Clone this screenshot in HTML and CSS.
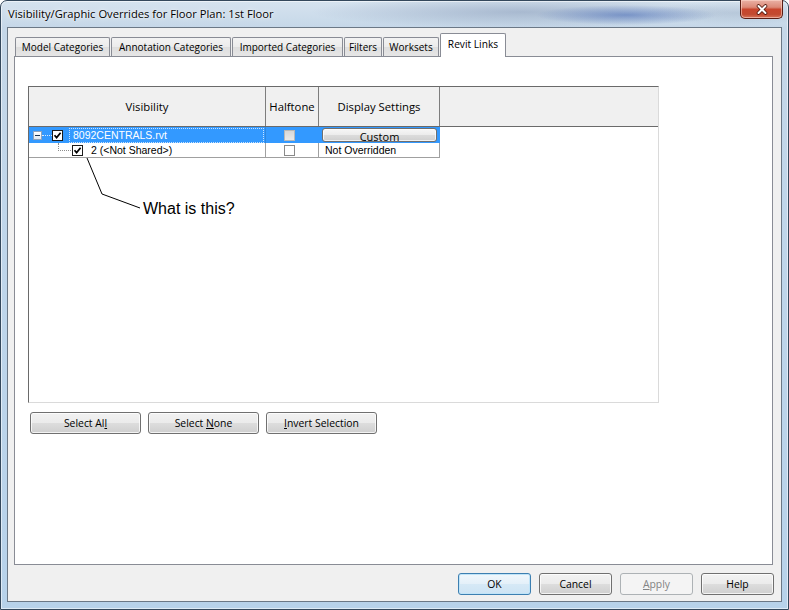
FILE: index.html
```html
<!DOCTYPE html>
<html lang="en">
<head>
<meta charset="utf-8">
<title>Visibility/Graphic Overrides</title>
<link rel="stylesheet" href="styles.css">
</head>
<body>
<div class="window">
  <div class="titlebar">
    <div class="title">Visibility/Graphic Overrides for Floor Plan: 1st Floor</div>
    <div class="close" aria-label="Close">
      <svg width="14" height="11" viewBox="0 0 14 11"><path d="M3.5 2 L10.5 9 M10.5 2 L3.5 9" stroke="#4a1208" stroke-width="3.6" stroke-linecap="round"/><path d="M3.5 2 L10.5 9 M10.5 2 L3.5 9" stroke="#ffffff" stroke-width="2" stroke-linecap="round"/></svg>
    </div>
  </div>
  <div class="client">
    <div class="tabs">
      <div class="tab w-model">Model Categories</div>
      <div class="tab w-anno">Annotation Categories</div>
      <div class="tab w-imp">Imported Categories</div>
      <div class="tab w-filt">Filters</div>
      <div class="tab w-work">Worksets</div>
      <div class="tab active w-links">Revit Links</div>
    </div>
    <div class="panel">
      <div class="grid">
        <div class="ghead">
          <div class="hcell col-vis">Visibility</div>
          <div class="hcell col-half">Halftone</div>
          <div class="hcell col-disp">Display Settings</div>
          <div class="hcell col-rest"></div>
        </div>
        <div class="grow selected">
          <div class="cell col-vis tree">
            <span class="expander"><span class="minus"></span></span>
            <span class="hdots"></span>
            <span class="cb dark"><svg width="9" height="9" viewBox="0 0 9 9"><path d="M1.5 4.2 L3.6 6.6 L7.6 1.8" fill="none" stroke="#000" stroke-width="1.7"/></svg></span>
            <span class="label focus">8092CENTRALS.rvt</span>
          </div>
          <div class="cell col-half"><span class="cb disabled"></span></div>
          <div class="cell col-disp"><div class="cellbtn">Custom</div></div>
        </div>
        <div class="grow">
          <div class="cell col-vis tree child">
            <span class="elbow"></span>
            <span class="cb dark"><svg width="9" height="9" viewBox="0 0 9 9"><path d="M1.5 4.2 L3.6 6.6 L7.6 1.8" fill="none" stroke="#000" stroke-width="1.7"/></svg></span>
            <span class="label">2 (&lt;Not Shared&gt;)</span>
          </div>
          <div class="cell col-half"><span class="cb"></span></div>
          <div class="cell col-disp"><span class="celltext">Not Overridden</span></div>
        </div>
      </div>
      <div class="actions">
        <button class="btn"><span>Select Al<u>l</u></span></button>
        <button class="btn"><span>Select <u>N</u>one</span></button>
        <button class="btn"><span><u>I</u>nvert Selection</span></button>
      </div>
    </div>
    <div class="footer">
      <button class="btn fbtn default"><span>OK</span></button>
      <button class="btn fbtn"><span>Cancel</span></button>
      <button class="btn fbtn disabled"><span><u>A</u>pply</span></button>
      <button class="btn fbtn"><span>Help</span></button>
    </div>
  </div>
</div>
<svg class="callout" width="789" height="610" viewBox="0 0 789 610"><polyline points="87,158 102,194 140,208" fill="none" stroke="#000" stroke-width="1"/></svg>
<div class="callout-text">What is this?</div>
</body>
</html>
```

FILE: styles.css
```css
* { box-sizing: border-box; }
html, body { margin: 0; padding: 0; }
body {
  width: 789px;
  height: 610px;
  overflow: hidden;
  position: relative;
  background: #ffffff;
  font-family: "Open Sans", "Noto Sans", sans-serif;
  color: #000;
}

.window {
  width: 789px;
  height: 610px;
  border: 1px solid #34485c;
  border-radius: 7px 7px 0 0;
  display: flex;
  flex-direction: column;
  background:
    radial-gradient(ellipse 90px 10px at 625px 14px, rgba(40, 80, 170, 0.45), rgba(40, 80, 170, 0) 100%),
    radial-gradient(ellipse 210px 16px at 520px 11px, rgba(110, 130, 165, 0.40), rgba(110, 130, 165, 0) 100%),
    radial-gradient(ellipse 90px 12px at 735px 12px, rgba(140, 160, 185, 0.35), rgba(140, 160, 185, 0) 100%),
    linear-gradient(to bottom, #d6e3ef 0px, #c5d7e8 27px, #c0d6ea 200px, #b7d2ea 100%);
  box-shadow: inset 0 0 0 1px rgba(255, 255, 255, 0.55);
}

.titlebar {
  height: 26px;
  flex: none;
  display: flex;
  justify-content: space-between;
  align-items: flex-start;
  padding-left: 7px;
}
.title {
  font-size: 11.2px;
  line-height: 26px;
  color: #000;
  text-shadow: 0 0 6px rgba(255, 255, 255, 0.9), 0 0 2px rgba(255, 255, 255, 0.9);
}
.close {
  width: 43px;
  height: 19px;
  margin-top: -1px;
  margin-right: 5px;
  border: 1px solid #5a1d14;
  border-top: none;
  border-radius: 0 0 5px 5px;
  background: linear-gradient(to bottom, #eab1a5 0%, #dc8a78 40%, #c8452d 52%, #c24a30 80%, #d8745a 100%);
  box-shadow: inset 0 0 0 1px rgba(255, 220, 210, 0.55);
  display: flex;
  align-items: center;
  justify-content: center;
}

.client {
  flex: 1;
  margin: 0 6px 7px 6px;
  border: 1px solid #6b7886;
  background: #f0f0f0;
  display: flex;
  flex-direction: column;
  padding-top: 5px;
}

.tabs {
  height: 23px;
  flex: none;
  display: flex;
  align-items: flex-end;
  gap: 1px;
  padding-left: 7px;
  position: relative;
  z-index: 1;
}
.tab {
  height: 19px;
  border: 1px solid #898c95;
  border-bottom: none;
  border-radius: 2px 2px 0 0;
  background: linear-gradient(to bottom, #f3f3f3 0%, #ebebeb 50%, #dedede 51%, #e6e6e6 100%);
  font-size: 10px;
  display: flex;
  align-items: center;
  justify-content: center;
  white-space: nowrap;
  flex: none;
}
.tab.active {
  height: 24px;
  margin-bottom: -1px;
  background: #ffffff;
  font-size: 10.2px;
  padding-bottom: 3px;
}
.w-model { width: 95px; }
.w-anno { width: 120px; }
.w-imp { width: 111px; }
.w-filt { width: 38px; }
.w-work { width: 56px; }
.w-links { width: 66px; }

.panel {
  flex: none;
  width: 759px;
  height: 509px;
  margin-left: 6px;
  border: 1px solid #898c95;
  background: #ffffff;
}

.grid {
  width: 631px;
  height: 317px;
  margin: 29px 0 0 13px;
  border-top: 1px solid #6a6a6a;
  border-left: 1px solid #6a6a6a;
  border-right: 1px solid #dadada;
  border-bottom: 1px solid #dadada;
  background: #ffffff;
}
.ghead {
  height: 40px;
  display: flex;
  background: #f0f0f0;
  border-bottom: 1px solid #6a6a6a;
}
.hcell {
  display: flex;
  align-items: center;
  justify-content: center;
  font-size: 11.3px;
  border-right: 1px solid #7d7d7d;
  padding-bottom: 1px;
}
.hcell.col-rest { border-right: none; }
.col-vis { width: 237px; flex: none; }
.col-half { width: 53px; flex: none; }
.col-disp { width: 121px; flex: none; }
.col-rest { flex: 1; }

.grow {
  display: flex;
  height: 15px;
  width: 411px;
  border-bottom: 1px solid #a0a0a0;
}
.grow.selected {
  height: 16px;
  border-bottom: none;
  background: #3399ff;
}
.cell {
  display: flex;
  align-items: center;
  border-right: 1px solid #a0a0a0;
  font-family: "Liberation Sans", Arial, sans-serif;
  font-size: 10.5px;
}
.grow.selected .cell { border-right-color: #3399ff; }
.grow.selected .col-vis { border-right-color: #2f86dd; }

.tree { padding-left: 4px; }
.expander {
  width: 9px;
  height: 9px;
  flex: none;
  border: 1px solid #8ea3bd;
  background: linear-gradient(to bottom, #ffffff, #dfe8f2);
  display: flex;
  align-items: center;
  justify-content: center;
}
.minus { width: 5px; height: 1px; background: #1d3552; }
.hdots {
  width: 10px;
  flex: none;
  height: 0;
  border-top: 1px dotted #d8ebff;
}
.cb {
  width: 11px;
  height: 11px;
  flex: none;
  border: 1px solid #8a8a8a;
  background: #ffffff;
  display: flex;
  align-items: center;
  justify-content: center;
}
.cb.dark { border-color: #1c1c1c; }
.cb.disabled {
  border-color: #b8b8b8;
  background: linear-gradient(to bottom, #d7d7d7, #e9e9e9);
}
.label { white-space: nowrap; }
.label.focus {
  flex: 1;
  height: 15px;
  margin-left: 6px;
  margin-right: 1px;
  padding-left: 3px;
  border: 1px dotted #c9e3ff;
  color: #ffffff;
  display: flex;
  align-items: center;
}
.tree.child { padding-left: 29px; }
.elbow {
  width: 13px;
  height: 8px;
  flex: none;
  align-self: flex-start;
  border-left: 1px dotted #8c8c8c;
  border-bottom: 1px dotted #8c8c8c;
}
.tree.child .cb { margin-left: 1px; }
.tree.child .label { margin-left: 8px; }

.col-half.cell { padding-left: 18px; }
.col-disp.cell { padding: 1px 2px 1px 3px; align-items: flex-start; }
.grow:not(.selected) .col-disp.cell { padding: 0 0 0 6px; align-items: center; }
.cellbtn {
  width: 116px;
  height: 14px;
  border: 1px solid #6f6f6f;
  border-radius: 3px;
  background: linear-gradient(to bottom, #f6f6f6 0%, #ececec 50%, #dcdcdc 51%, #cfcfcf 100%);
  box-shadow: inset 0 0 0 1px rgba(255, 255, 255, 0.7);
  font-family: "Open Sans", "Noto Sans", sans-serif;
  font-size: 11px;
  line-height: 13px;
  padding-top: 1px;
  text-align: center;
}
.celltext { white-space: nowrap; }

.actions {
  display: flex;
  gap: 7px;
  padding-left: 15px;
  margin-top: 9px;
}
.btn {
  width: 111px;
  height: 22px;
  padding: 0;
  border: 1px solid #707070;
  border-radius: 3px;
  background: linear-gradient(to bottom, #f2f2f2 0%, #ebebeb 50%, #dddddd 51%, #cfcfcf 100%);
  box-shadow: inset 0 0 0 1px rgba(255, 255, 255, 0.75);
  font-family: "Open Sans", "Noto Sans", sans-serif;
  font-size: 10.4px;
  color: #000;
  display: flex;
  align-items: center;
  justify-content: center;
  white-space: nowrap;
}
.btn u { text-underline-offset: 1px; }

.footer {
  display: flex;
  justify-content: flex-end;
  gap: 8px;
  padding-right: 7px;
  margin-top: 8px;
}
.fbtn { width: 73px; }
.btn.default {
  border-color: #3c7fb1;
  box-shadow: inset 0 0 0 1px #c0e4f8;
  background: linear-gradient(to bottom, #f0f7fc 0%, #e4f0f9 50%, #d6e9f6 51%, #cde4f4 100%);
}
.btn.disabled {
  border-color: #adb2b5;
  background: #f4f4f4;
  color: #838383;
  box-shadow: none;
}

.callout {
  position: absolute;
  left: 0;
  top: 0;
  pointer-events: none;
}
.callout-text {
  position: absolute;
  left: 143px;
  top: 201px;
  font-family: "Liberation Sans", Arial, sans-serif;
  font-size: 16px;
  line-height: 16px;
  color: #000;
  white-space: nowrap;
}
```
